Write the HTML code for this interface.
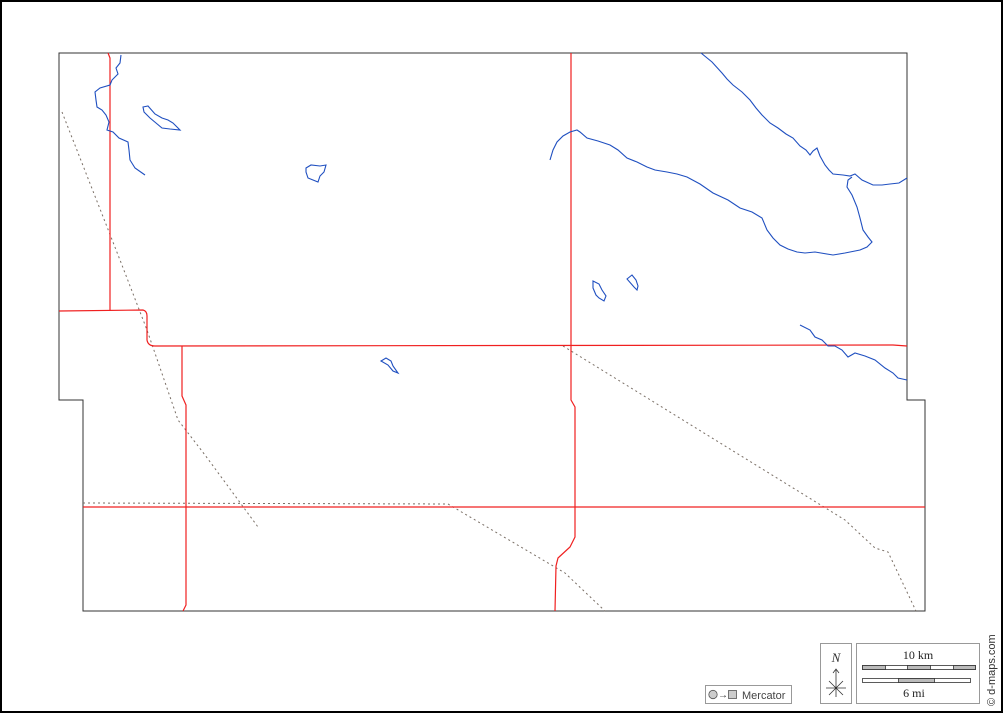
<!DOCTYPE html>
<html><head><style>
html,body{margin:0;padding:0;background:#fff;}
svg{display:block;}
</style></head><body>
<svg width="1003" height="713" viewBox="0 0 1003 713" xmlns="http://www.w3.org/2000/svg">
<rect x="0" y="0" width="1003" height="713" fill="#fff"/>
<rect x="1" y="1" width="1001" height="711" fill="none" stroke="#000" stroke-width="2"/>
<path d="M59,53 L907,53 L907,400 L925,400 L925,611 L83,611 L83,400 L59,400 Z" fill="none" stroke="#333" stroke-width="1"/>
<g fill="none" stroke="#7a6f66" stroke-width="1" stroke-dasharray="2,3">
<path d="M62,112 L120,260 L147,330 L178,420 L205,455 L258,527"/>
<path d="M563,346 L845,520 L875,548 L888,552 L916,611"/>
<path d="M83,503 L448,504 L565,573 L605,611"/>
</g>
<g fill="none" stroke="#f02020" stroke-width="1.2">
<path d="M108,53 L110,58 L110,311"/>
<path d="M59,311 L143,310 Q147,311 147,316 L147,340 Q148,346 155,346 L893,345 L907,346"/>
<path d="M182,346 L182,396 L186,405 L186,605 L183,611"/>
<path d="M571,53 L571,400 L575,407 L575,537 L570,547 L558,558 L556,566 L555,611"/>
<path d="M83,507 L925,507"/>
</g>
<g fill="none" stroke="#1f4fc0" stroke-width="1.1">
<path d="M121,55 L120,63 L116,68 L118,74 L112,80 L110,85 L100,88 L95,92 L96,100 L97,107 L102,110 L106,115 L109,122 L107,130 L113,132 L119,138 L128,142 L129,150 L130,160 L135,168 L145,175"/>
<path d="M143,107 L148,106 L155,114 L162,118 L168,120 L173,123 L180,130 L170,129 L162,128 L156,123 L150,118 L144,112 Z"/>
<path d="M306,168 L311,165 L320,166 L326,165 L324,172 L320,176 L318,182 L313,180 L308,178 L306,172 Z"/>
<path d="M381,361 L386,358 L391,361 L393,366 L398,373 L393,371 L388,365 Z"/>
<path d="M593,281 L599,284 L602,290 L606,296 L604,301 L599,298 L596,295 L593,288 Z"/>
<path d="M627,279 L632,275 L636,280 L638,286 L637,290 L634,287 Z"/>
<path d="M701,53 L712,62 L722,73 L727,79 L733,85 L742,92 L750,100 L756,108 L762,115 L770,123 L778,128 L786,134 L793,138 L800,146 L806,150 L810,155 L813,151 L817,148 L820,156 L825,165 L829,170 L833,174 L843,175 L850,176 L855,174 L862,180 L873,185 L882,185 L890,184 L899,183 L907,178"/>
<path d="M852,177 L848,180 L847,187 L852,195 L857,207 L860,218 L863,230 L868,237 L872,242 L867,247 L860,250 L845,253 L833,255 L815,252 L805,253 L797,252 L788,249 L780,245 L773,238 L767,230 L762,218 L752,212 L740,208 L728,200 L713,193 L700,184 L687,177 L677,174 L667,172 L655,170 L647,167 L637,162 L627,158 L618,150 L610,145 L598,141 L587,138 L580,132 L577,130 L570,132 L563,136 L557,142 L553,150 L550,160"/>
<path d="M800,325 L810,330 L815,337 L822,340 L828,346 L835,346 L842,350 L848,357 L855,353 L865,356 L875,360 L885,368 L893,373 L898,378 L907,380"/>
</g>
<rect x="705.5" y="685.5" width="86" height="18" fill="#fff" stroke="#999"/>
<circle cx="713" cy="694.5" r="4.2" fill="#ccc" stroke="#555" stroke-width="0.8"/>
<text x="718" y="698" font-family="Liberation Sans, sans-serif" font-size="10" fill="#333">→</text>
<rect x="728.5" y="690.5" width="8" height="8" fill="#ccc" stroke="#555" stroke-width="0.8"/>
<text x="742" y="699" font-family="Liberation Sans, sans-serif" font-size="11" fill="#444">Mercator</text>
<rect x="820.5" y="643.5" width="31" height="60" fill="#fff" stroke="#999"/>
<text x="836" y="662" text-anchor="middle" font-family="Liberation Serif, serif" font-style="italic" font-size="13" fill="#333">N</text>
<path d="M836,670 L836,697 M833,673 L836,669 L839,673 M826,688 L846,688 M829,681 L843,695 M843,681 L829,695" stroke="#333" stroke-width="0.8" fill="none"/>
<rect x="856.5" y="643.5" width="123" height="60" fill="#fff" stroke="#999"/>
<text x="918" y="659" text-anchor="middle" font-family="Liberation Serif, serif" font-size="12" fill="#222">10 km</text>
<rect x="862.5" y="665.5" width="113" height="4" fill="#fff" stroke="#333" stroke-width="0.8"/>
<rect x="862.5" y="665.5" width="23" height="4" fill="#bbb" stroke="#333" stroke-width="0.8"/>
<rect x="907.5" y="665.5" width="23" height="4" fill="#bbb" stroke="#333" stroke-width="0.8"/>
<rect x="953.5" y="665.5" width="22" height="4" fill="#bbb" stroke="#333" stroke-width="0.8"/>
<rect x="862.5" y="678.5" width="108" height="4" fill="#fff" stroke="#333" stroke-width="0.8"/>
<rect x="898.5" y="678.5" width="36" height="4" fill="#bbb" stroke="#333" stroke-width="0.8"/>
<text x="914" y="697" text-anchor="middle" font-family="Liberation Serif, serif" font-size="12" fill="#222">6 mi</text>
<text transform="translate(995,706) rotate(-90)" font-family="Liberation Sans, sans-serif" font-size="11" fill="#333">© d-maps.com</text>
</svg>
</body></html>
